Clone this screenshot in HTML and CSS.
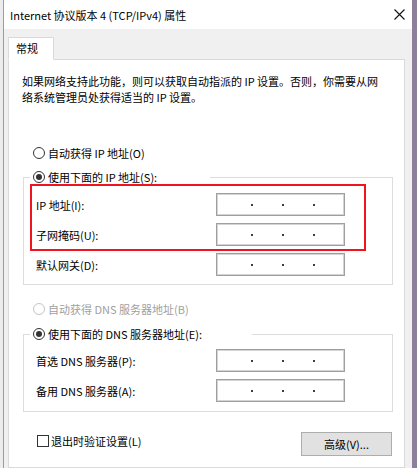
FILE: index.html
```html
<!DOCTYPE html>
<html lang="zh-CN">
<head>
    <meta charset="UTF-8">
    <meta name="viewport" content="width=device-width, initial-scale=1.0">
    <title>Internet 协议版本 4 (TCP/IPv4) 属性</title>
    <link rel="stylesheet" href="styles.css">
</head>
<body>
    <div class="window">
        <div class="titlebar">
            <span class="title">Internet 协议版本 4 (TCP/IPv4) 属性</span>
            <svg class="close" width="11" height="11" viewBox="0 0 11 11">
                <path d="M0.5 0.5 L10.5 10.5 M10.5 0.5 L0.5 10.5" stroke="#111" stroke-width="1.1" fill="none"/>
            </svg>
        </div>

        <div class="content">
            <div class="tabs">
                <div class="tab">常规</div>
            </div>

            <div class="panel">
                <p class="intro">如果网络支持此功能，则可以获取自动指派的 IP 设置。否则，你需要从网<br>络系统管理员处获得适当的 IP 设置。</p>

                <div class="radio-row first">
                    <span class="radio"></span>
                    <span>自动获得 IP 地址(O)</span>
                </div>

                <div class="group ip-group">
                    <div class="group-head ip-head">
                        <span class="radio checked"></span>
                        <span>使用下面的 IP 地址(S):</span>
                    </div>

                    <div class="highlight">
                        <div class="field-row">
                            <span class="field-label">IP 地址(I):</span>
                            <div class="ip-box"><i></i><i></i><i></i></div>
                        </div>
                        <div class="field-row">
                            <span class="field-label">子网掩码(U):</span>
                            <div class="ip-box"><i></i><i></i><i></i></div>
                        </div>
                    </div>

                    <div class="field-row outside">
                        <span class="field-label">默认网关(D):</span>
                        <div class="ip-box"><i></i><i></i><i></i></div>
                    </div>
                </div>

                <div class="radio-row dns-auto disabled">
                    <span class="radio"></span>
                    <span>自动获得 DNS 服务器地址(B)</span>
                </div>

                <div class="group dns-group">
                    <div class="group-head dns-head">
                        <span class="radio checked"></span>
                        <span>使用下面的 DNS 服务器地址(E):</span>
                    </div>

                    <div class="field-row outside first-dns">
                        <span class="field-label">首选 DNS 服务器(P):</span>
                        <div class="ip-box"><i></i><i></i><i></i></div>
                    </div>
                    <div class="field-row outside">
                        <span class="field-label">备用 DNS 服务器(A):</span>
                        <div class="ip-box"><i></i><i></i><i></i></div>
                    </div>
                </div>

                <div class="footer">
                    <label class="check-row">
                        <span class="checkbox"></span>
                        <span>退出时验证设置(L)</span>
                    </label>
                    <button class="advanced">高级(V)...</button>
                </div>
            </div>
        </div>
    </div>
</body>
</html>
```

FILE: styles.css
```css
body {
    margin: 0;
    padding: 0;
    height: 468px;
    overflow: hidden;
    font-family: "Noto Sans CJK SC", "Noto Sans", sans-serif;
    font-size: 11px;
    color: #000;
    background: linear-gradient(to right, #ececec 0, #ececec 412px, #8d7f9c 412px);
}

.window {
    margin-left: 3px;
    width: 408px;
    height: 468px;
    border-left: 1px solid #9c9c9c;
    background-color: #f0f0f0;
}

.titlebar {
    height: 29px;
    display: flex;
    align-items: center;
    justify-content: space-between;
    padding: 0 7px 0 6px;
    background-color: #ffffff;
}

.title {
    font-size: 11px;
    line-height: 16px;
    margin-top: 1px;
}

.content {
    padding: 8px 7px 0 4px;
}

.tabs {
    display: flex;
    position: relative;
    z-index: 1;
    margin-bottom: -1px;
}

.tab {
    width: 44px;
    height: 21px;
    line-height: 20px;
    text-indent: 7px;
    background-color: #ffffff;
    border: 1px solid #d9d9d9;
    border-bottom: 1px solid #ffffff;
}

.panel {
    height: 394px;
    padding: 13px 12px 0 13px;
    background-color: #ffffff;
    border: 1px solid #d9d9d9;
}

.intro {
    margin: 0;
    line-height: 16px;
}

.radio-row {
    display: flex;
    align-items: center;
    height: 16px;
    padding-left: 11px;
}

.radio-row.first {
    margin-top: 40px;
}

.radio {
    box-sizing: border-box;
    width: 12px;
    height: 12px;
    margin-right: 3px;
    border: 1px solid #333333;
    border-radius: 50%;
    background-color: #ffffff;
    display: flex;
    align-items: center;
    justify-content: center;
    flex-shrink: 0;
}

.radio.checked::after {
    content: "";
    width: 6px;
    height: 6px;
    border-radius: 50%;
    background-color: #333333;
}

.disabled {
    color: #a0a0a0;
}

.disabled .radio {
    border-color: #c4c4c4;
}

.group {
    margin: 16px -1px 0 1px;
    border: 1px solid #dcdcdc;
}

.group-head {
    display: flex;
    align-items: center;
    height: 16px;
    margin: -9px 0 0 6px;
    padding-left: 3px;
    background-color: #ffffff;
}

.ip-head {
    width: 177px;
}

.dns-head {
    width: 219px;
}

.ip-group {
    padding-bottom: 8px;
}

.highlight {
    margin: -1px 26px 0 6px;
    padding: 7px 0 3px 4px;
    border: 2px solid #f0141e;
}

.field-row {
    display: flex;
    align-items: center;
    height: 23px;
}

.field-row + .field-row {
    margin-top: 7px;
}

.field-row.outside {
    padding-left: 12px;
    margin-top: 2px;
}

.field-row.outside + .field-row.outside {
    margin-top: 7px;
}

.field-row.first-dns {
    margin-top: 7px;
}

.field-label {
    width: 180px;
    flex-shrink: 0;
}

.ip-box {
    box-sizing: border-box;
    width: 129px;
    height: 23px;
    border: 1px solid #9f9f9f;
    box-shadow: inset 0 0 0 1px #d4d4d4;
    display: flex;
    align-items: center;
    padding: 1px 0 0 34px;
    gap: 29px;
}

.ip-box i {
    width: 2px;
    height: 2px;
    background-color: #3b3b50;
}

.radio-row.dns-auto {
    margin-top: 16px;
}

.dns-group {
    margin-top: 17px;
    padding-bottom: 9px;
}

.footer {
    display: flex;
    justify-content: space-between;
    align-items: flex-start;
    margin-top: 20px;
}

.check-row {
    display: flex;
    align-items: center;
    height: 16px;
    margin: 1px 0 0 15px;
}

.checkbox {
    box-sizing: border-box;
    width: 12px;
    height: 12px;
    margin-right: 2px;
    border: 1px solid #333333;
    background-color: #ffffff;
}

.advanced {
    width: 91px;
    height: 24px;
    padding: 0;
    font-family: inherit;
    font-size: 11px;
    color: #000;
    background-color: #e1e1e1;
    border: 1px solid #adadad;
}
```
